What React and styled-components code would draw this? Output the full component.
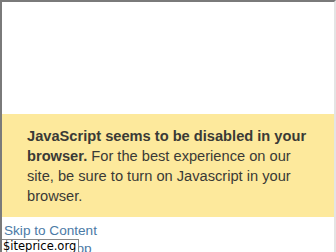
import React from "react";
import styled, { createGlobalStyle } from "styled-components";

const GlobalStyle = createGlobalStyle`
    html, body{
        margin: 0;
        padding: 0;
        background: #fff;
        overflow: hidden;
    }
`;

function App(){
    return (
        <>
            <GlobalStyle />
            <Frame>
                <Blank />
                <Notice>
                    <strong>JavaScript seems to be disabled in your browser.</strong>{" "}
                    For the best experience on our site, be sure to turn on Javascript in your browser.
                </Notice>
                <Links>
                    <Link href="#content">Skip to Content</Link>
                    <Link href="#app">Download App</Link>
                </Links>
                <Watermark>$iteprice.org</Watermark>
            </Frame>
        </>
    )
}

const Frame = styled.div`
    position: relative;
    box-sizing: border-box;
    width: 336px;
    height: 252px;
    overflow: hidden;
    border-top: 2px solid #7a7a7a;
    border-left: 2px solid #7a7a7a;
    border-right: 2px solid #e4e4e4;
    font-family: "Liberation Sans", Arial, sans-serif;
`;

const Blank = styled.div`
    height: 112px;
`;

const Notice = styled.div`
    background: #fde99c;
    color: #3a3a36;
    font-size: 14.65px;
    line-height: 20px;
    padding: 12px 24px 11px 25px;

    strong{
        font-weight: bold;
    }
`;

const Links = styled.div`
    display: flex;
    flex-direction: column;
    padding: 5px 0 0 2px;
`;

const Link = styled.a`
    color: #4b7aa6;
    font-size: 13.6px;
    line-height: 18px;
    text-decoration: none;
`;

const Watermark = styled.div`
    position: absolute;
    left: -2px;
    bottom: 0;
    padding: 0 2px 0 3px;
    background: #fff;
    border: 1px solid #888;
    border-left: none;
    border-bottom: none;
    color: #000;
    font-family: "DejaVu Sans", sans-serif;
    font-size: 11.5px;
    line-height: 12px;
`;

export default App;
